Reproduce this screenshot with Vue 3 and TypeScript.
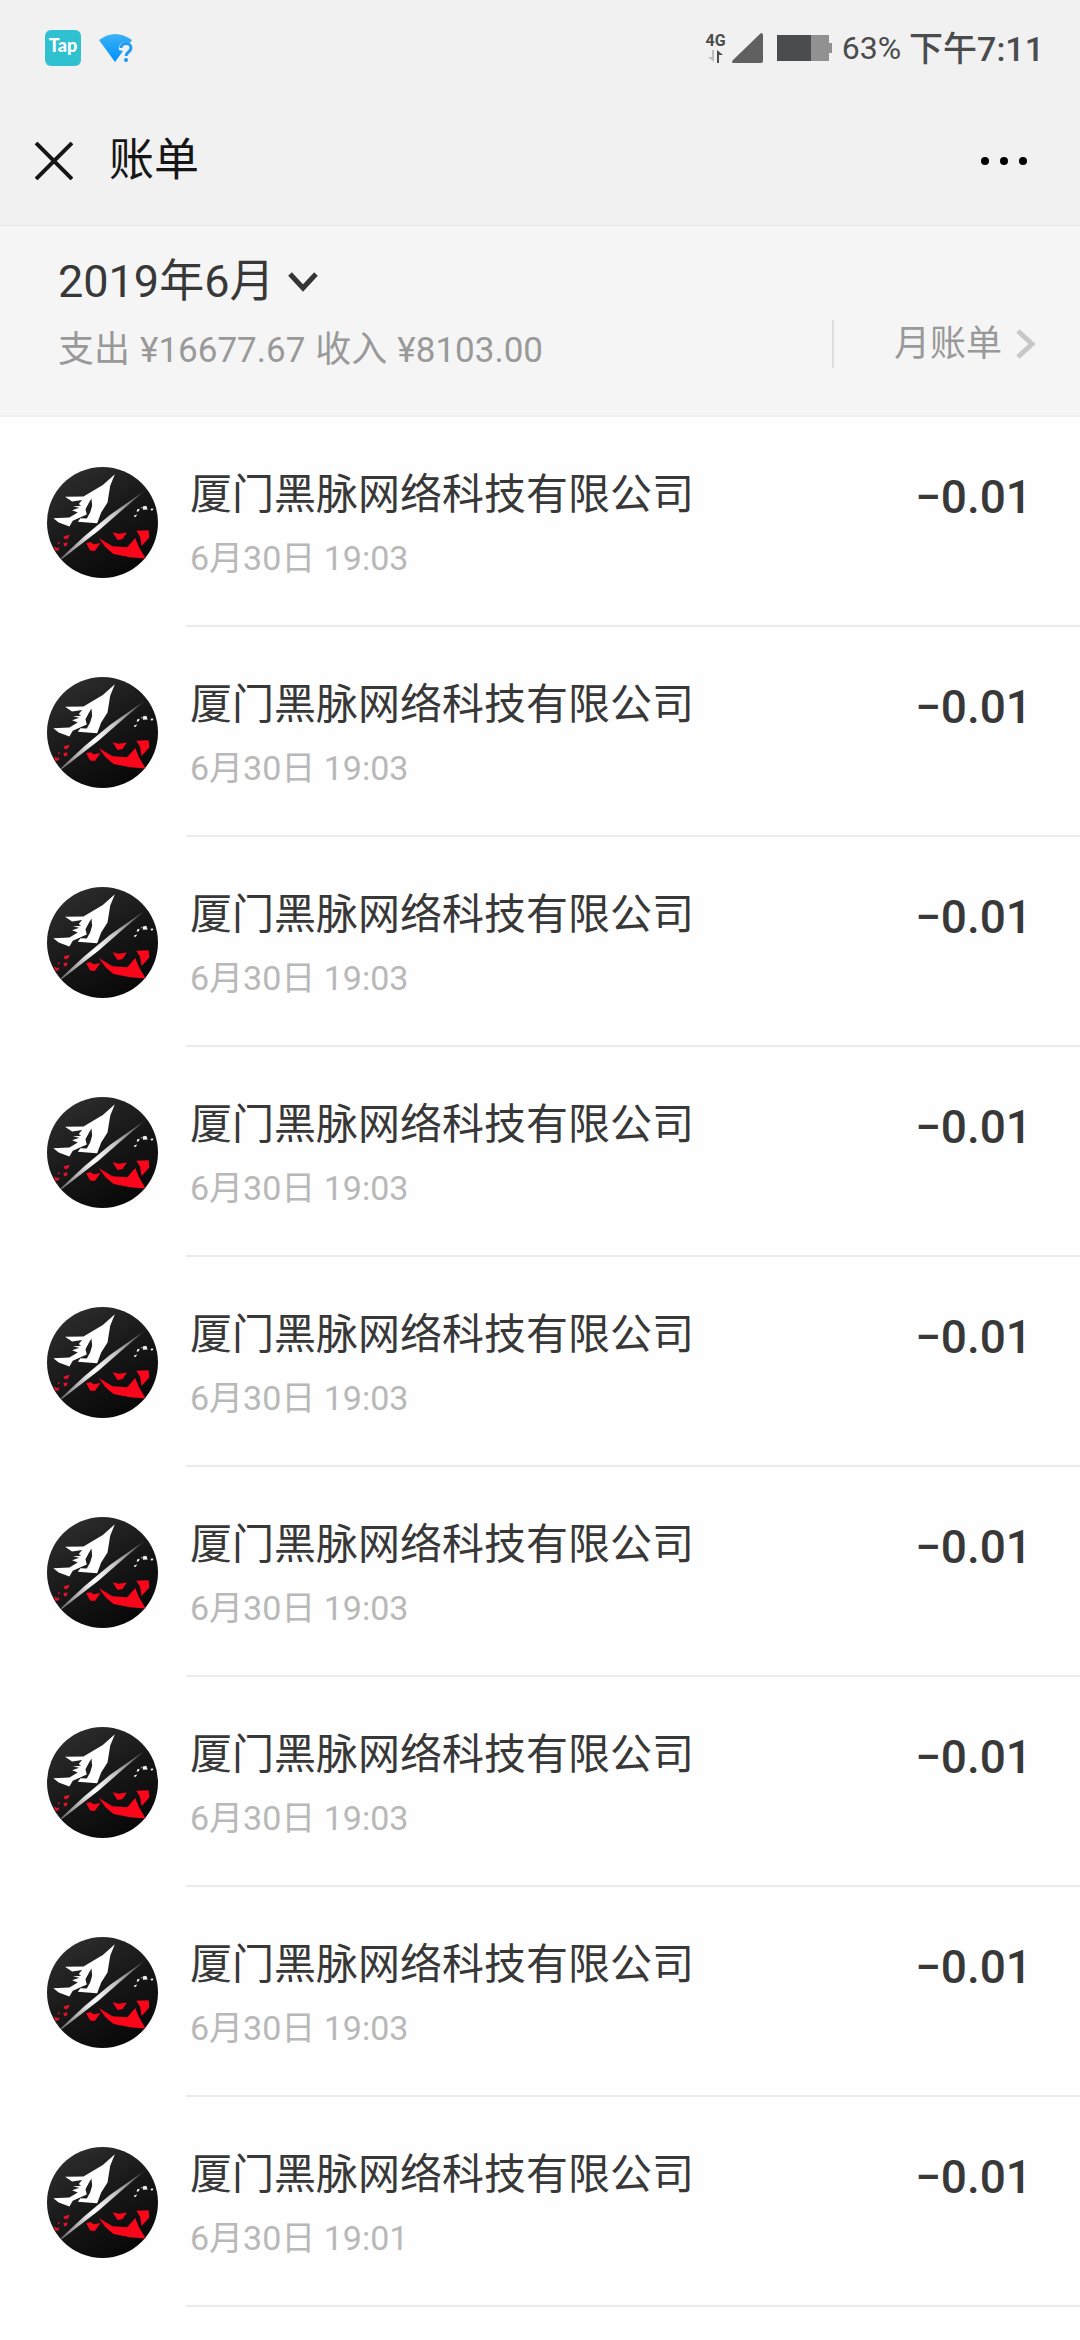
<script setup lang="ts">
interface Bill {
  id: number
  name: string
  time: string
  amount: string
}

const times: string[] = [
  '19:03', '19:03', '19:03', '19:03', '19:03', '19:03', '19:03', '19:03', '19:01',
]

const bills: Bill[] = times.map((time, id) => ({
  id,
  name: '厦门黑脉网络科技有限公司',
  time: `6月30日 ${time}`,
  amount: '−0.01',
}))
</script>

<template>
  <div class="page">
    <svg class="defs" aria-hidden="true">
      <defs>
        <linearGradient id="disc" x1="0.2" y1="0" x2="0.8" y2="1">
          <stop offset="0" stop-color="#2e2e2e" />
          <stop offset="0.5" stop-color="#171717" />
          <stop offset="1" stop-color="#060606" />
        </linearGradient>
        <linearGradient id="blade" gradientUnits="userSpaceOnUse" x1="344" y1="124" x2="94" y2="326">
          <stop offset="0" stop-color="#fff" stop-opacity="0.15" />
          <stop offset="0.35" stop-color="#fff" stop-opacity="0.75" />
          <stop offset="0.6" stop-color="#fff" />
          <stop offset="1" stop-color="#fff" stop-opacity="0.35" />
        </linearGradient>
        <linearGradient id="wifi" x1="0" y1="0" x2="0" y2="1">
          <stop offset="0" stop-color="#3db2f5" />
          <stop offset="1" stop-color="#0090ff" />
        </linearGradient>
        <symbol id="logo" viewBox="51 52 332 332">
          <circle cx="217" cy="218" r="166" fill="url(#disc)" />
          <path d="M254 74 L240 108 L232 158 L213 188 L201 220 L143 216 L151 205 L170 206 L180 188 L186 168 L184 146 L176 160 L166 178 L170 194 L128 213 L118 230 L86 218 L70 205 L118 203 L143 188 L126 181 L148 174 L128 170 L153 168 L146 163 L156 151 L126 155 L105 141 L160 140 L218 106 Z" fill="#fff" />
          <path d="M344 122 L270 186 L205 243 L95 328 L92 325 L160 261 L240 195 Z" fill="url(#blade)" />
          <path d="M206 264 L247 289 L291 292 L315 264 L326 292 L346 326 L300 322 L250 312 L226 292 Z" fill="#f9061b" />
          <path d="M318 243 L355 241 L357 263 L334 288 L329 260 Z" fill="#f9061b" />
          <path d="M247 247 L266 252 L290 248 L277 267 L262 270 Z" fill="#f9061b" />
          <path d="M168 279 L182 277 L190 283 L211 279 L194 303 L180 302 Z" fill="#f9061b" />
          <path d="M100 260 l18 -5 -3 10 -10 4z M100 280 l12 -3 -1 10 -8 3z M84 278 l5 -2 -1 6 -4 1z M80 295 l8 -3 -2 9 -9 2z M72 290 l7 3 5 5 -8 4z" fill="#e8102a" />
          <path d="M337 170 l11 -2 4 11 -14 1z M321 178 l7 -1 -2 7 -7 2z M361 177 l8 -1 -1 5 -6 1z M312 196 l9 -2 -4 6 -5 2z M331 174 l4 -2 -1 4z" fill="#f2f2f2" />
        </symbol>
      </defs>
    </svg>

    <div class="status">
      <div class="group">
        <svg class="tap" viewBox="0 0 36 36" role="img" aria-label="Tap">
          <rect width="36" height="36" rx="6" fill="#2fc1cf" />
          <text x="18" y="22" text-anchor="middle" class="tap-text">Tap</text>
        </svg>
        <svg class="wifi" viewBox="0 0 34 28" aria-hidden="true">
          <path d="M0 6 Q16 -6 33 6 L31 9 C25 6 19 10 20 16 L24 17 L16 28 Z" fill="url(#wifi)" />
          <path d="M22 14 C22 8 32 8 32 14 C32 18 27 18 27 22" fill="none" stroke="#1e9df8" stroke-width="3" />
          <circle cx="27" cy="26" r="2" fill="#0c97fc" />
        </svg>
      </div>
      <div class="group">
        <div class="network">
          <span>4G</span>
          <svg viewBox="0 0 16 13" width="16" height="13" aria-hidden="true">
            <path d="M4 0 H6 V12 L0 7 H4 Z" fill="#bdbdbd" />
            <path d="M9 0 L15 5 H11 V13 H9 Z" fill="#4c4c4c" />
          </svg>
        </div>
        <svg class="signal" viewBox="0 0 31 30" aria-hidden="true">
          <path d="M29 0 Q31 0 31 2 V28 Q31 30 29 30 H1 Q-1 29 1 27 Z" fill="#606060" />
        </svg>
        <svg class="battery" viewBox="0 0 55 26" aria-hidden="true">
          <rect width="34" height="26" fill="#4a4c4d" />
          <rect x="34" width="18" height="26" fill="#919191" />
          <rect x="52" y="8" width="3" height="10" fill="#919191" />
        </svg>
        <span class="percent">63%</span>
        <span class="clock">下午7:11</span>
      </div>
    </div>

    <header class="nav">
      <button class="icon-btn close" type="button" aria-label="关闭">
        <svg viewBox="0 0 38 38" width="38" height="38">
          <path d="M1 1 L37 37 M37 1 L1 37" stroke="#161616" stroke-width="4" />
        </svg>
      </button>
      <h1>账单</h1>
      <button class="icon-btn more" type="button" aria-label="更多">
        <svg viewBox="0 0 48 10" width="48" height="10">
          <circle cx="5" cy="5" r="4" />
          <circle cx="24" cy="5" r="4" />
          <circle cx="43" cy="5" r="4" />
        </svg>
      </button>
    </header>

    <section class="summary">
      <div class="period">
        <button class="month" type="button">
          2019年6月
          <svg viewBox="0 0 30 20" width="30" height="20" aria-hidden="true">
            <path d="M2 2 L15 16 L28 2" fill="none" stroke="#353535" stroke-width="5" />
          </svg>
        </button>
        <p class="totals">
          <span>支出</span>
          <span class="sum">¥16677.67</span>
          <span>收入</span>
          <span class="sum">¥8103.00</span>
        </p>
      </div>
      <a class="report" href="#">
        月账单
        <svg viewBox="0 0 20 30" width="20" height="30" aria-hidden="true">
          <path d="M2 2 L16 15 L2 28" fill="none" stroke="#c7c7c7" stroke-width="5" />
        </svg>
      </a>
    </section>

    <ul class="bills">
      <li v-for="bill in bills" :key="bill.id">
        <svg class="avatar" aria-hidden="true"><use href="#logo" /></svg>
        <div class="entry">
          <div class="info">
            <h2>{{ bill.name }}</h2>
            <time>{{ bill.time }}</time>
          </div>
          <strong>{{ bill.amount }}</strong>
        </div>
      </li>
    </ul>
  </div>
</template>

<style>
body {
  margin: 0;
  background: #fefefe;
}
</style>

<style scoped>
.page {
  min-height: 100vh;
  background: #fefefe;
  color: #383838;
  font-family: Roboto, "Noto Sans CJK SC", sans-serif;
  font-weight: 400;
}

.defs {
  position: absolute;
  width: 0;
  height: 0;
}

h1,
h2,
p,
ul {
  margin: 0;
  padding: 0;
  font-weight: 400;
}

button {
  margin: 0;
  padding: 0;
  border: 0;
  background: none;
  color: inherit;
  font: inherit;
}

svg {
  display: block;
  flex: none;
}

.status {
  display: flex;
  justify-content: space-between;
  align-items: center;
  height: 96px;
  padding: 0 36px 0 45px;
  background: #f1f1f1;
  color: #4a4c4d;
}

.group {
  display: flex;
  align-items: center;
}

.tap {
  width: 36px;
  height: 36px;
}

.tap-text {
  font-family: Lato, sans-serif;
  font-size: 18px;
  font-weight: 900;
  fill: #fff;
}

.wifi {
  width: 34px;
  height: 28px;
  margin-left: 18px;
}

.network {
  display: flex;
  flex-direction: column;
  align-items: center;
  gap: 1px;
  margin-right: 6px;
  font-size: 16px;
  font-weight: 700;
  line-height: 16px;
}

.signal {
  width: 31px;
  height: 30px;
  margin-right: 14px;
}

.battery {
  width: 55px;
  height: 26px;
  margin-right: 10px;
}

.percent {
  margin-right: 8px;
  font-size: 32px;
}

.clock {
  padding-bottom: 4px;
  font-size: 34px;
  font-weight: 500;
}

.nav {
  display: flex;
  align-items: center;
  height: 129px;
  padding: 0 52px 0 35px;
  border-bottom: 1px solid #e9e9e9;
  background: #f1f1f1;
}

.nav h1 {
  flex: 1;
  margin-left: 36px;
  color: #161616;
  font-size: 45px;
  line-height: 64px;
}

.summary {
  display: flex;
  justify-content: space-between;
  align-items: flex-start;
  height: 191px;
  box-sizing: border-box;
  padding: 24px 44px 0 58px;
  border-bottom: 2px solid #f0f0f0;
  background: #f5f5f5;
}

.month {
  display: flex;
  align-items: center;
  gap: 14px;
  font-size: 45px;
  line-height: 64px;
}

.totals {
  display: flex;
  align-items: baseline;
  gap: 10px;
  margin-top: 10px;
  color: #999;
  font-size: 36px;
  line-height: 52px;
}

.totals .sum {
  font-size: 35px;
}

.report {
  display: flex;
  align-items: center;
  gap: 14px;
  height: 48px;
  margin-top: 70px;
  padding-left: 60px;
  border-left: 2px solid #dedede;
  color: #999;
  font-size: 36px;
  line-height: 48px;
  text-decoration: none;
}

.bills {
  list-style: none;
}

.bills li {
  display: flex;
  padding-left: 47px;
}

.avatar {
  width: 111px;
  height: 111px;
  margin: 50px 28px 0 0;
}

.entry {
  display: flex;
  flex: 1;
  justify-content: space-between;
  height: 160px;
  padding: 48px 48px 0 4px;
  border-bottom: 2px solid #ececec;
}

.info h2 {
  font-size: 42px;
  line-height: 60px;
}

.info time {
  display: block;
  margin-top: 8px;
  color: #b8b8b8;
  font-size: 34px;
  line-height: 50px;
}

.entry strong {
  font-size: 46px;
  font-weight: 500;
  line-height: 64px;
}
</style>
